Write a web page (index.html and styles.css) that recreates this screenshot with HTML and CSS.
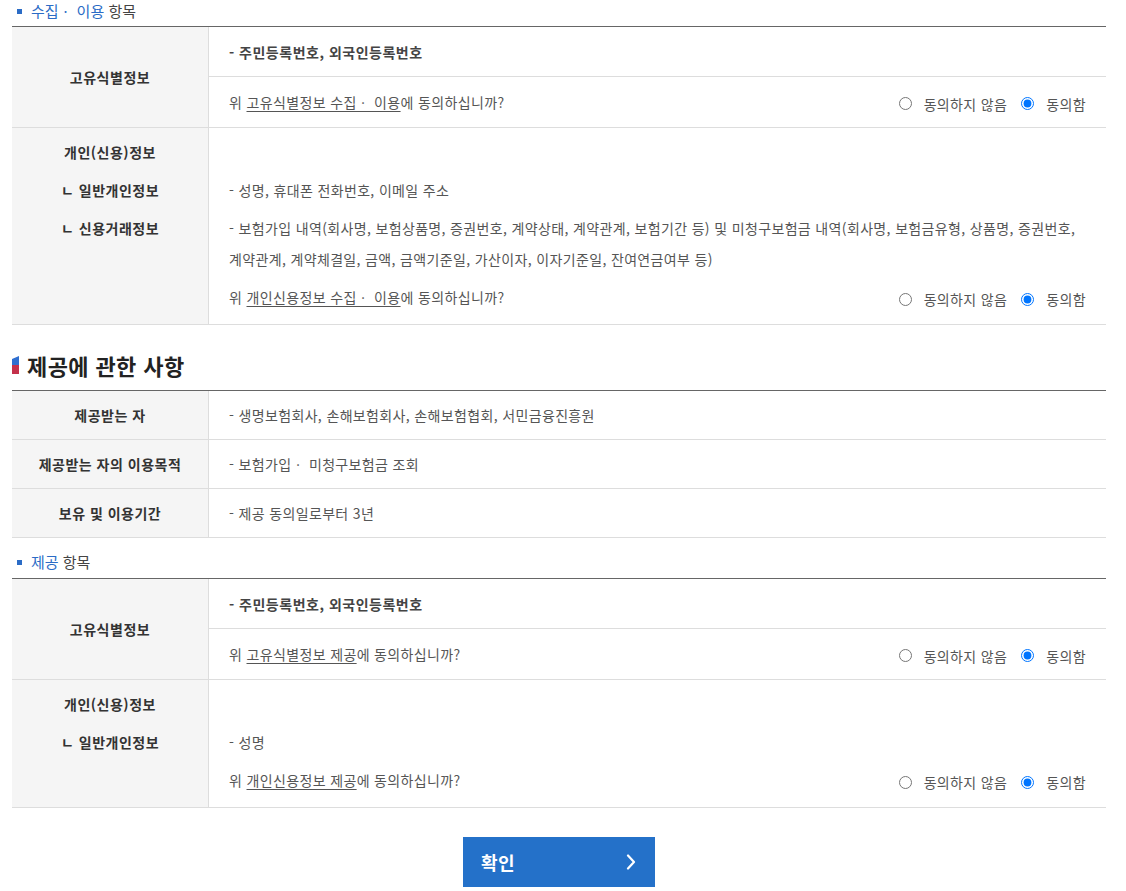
FILE: index.html
```html
<!DOCTYPE html>
<html lang="ko">
<head>
<meta charset="utf-8">
<title>개인(신용)정보 수집·이용·제공 동의</title>
<link rel="stylesheet" href="styles.css">
</head>
<body>
<div class="page">
  <h4 class="sub-title"><span class="hl">수집ㆍ 이용</span> 항목</h4>
  <div class="info-table">
    <div class="row">
      <div class="th">고유식별정보</div>
      <div class="td split">
        <div class="line strong">- 주민등록번호, 외국인등록번호</div>
        <div class="line question">
          <p>위 <u>고유식별정보 수집ㆍ 이용</u>에 동의하십니까?</p>
          <div class="agree">
            <label><input type="radio" name="q1"> 동의하지 않음</label>
            <label><input type="radio" name="q1" checked> 동의함</label>
          </div>
        </div>
      </div>
    </div>
    <div class="row">
      <div class="th multi">
        <p>개인(신용)정보</p>
        <p>ㄴ 일반개인정보</p>
        <p>ㄴ 신용거래정보</p>
      </div>
      <div class="td stack">
        <p>- 성명, 휴대폰 전화번호, 이메일 주소</p>
        <p>- 보험가입 내역(회사명, 보험상품명, 증권번호, 계약상태, 계약관계, 보험기간 등) 및 미청구보험금 내역(회사명, 보험금유형, 상품명, 증권번호, 계약관계, 계약체결일, 금액, 금액기준일, 가산이자, 이자기준일, 잔여연금여부 등)</p>
        <div class="question">
          <p>위 <u>개인신용정보 수집ㆍ 이용</u>에 동의하십니까?</p>
          <div class="agree">
            <label><input type="radio" name="q2"> 동의하지 않음</label>
            <label><input type="radio" name="q2" checked> 동의함</label>
          </div>
        </div>
      </div>
    </div>
  </div>

  <h3 class="section-title"><span class="mark"><svg width="7" height="18" viewBox="0 0 7 18"><polygon points="0,3 7,0 7,9 0,9" fill="#2f6fd0"/><polygon points="0,9 7,9 7,18 0,18" fill="#c4314b"/></svg></span>제공에 관한 사항</h3>
  <div class="info-table">
    <div class="row simple">
      <div class="th">제공받는 자</div>
      <div class="td">- 생명보험회사, 손해보험회사, 손해보험협회, 서민금융진흥원</div>
    </div>
    <div class="row simple">
      <div class="th">제공받는 자의 이용목적</div>
      <div class="td">- 보험가입ㆍ 미청구보험금 조회</div>
    </div>
    <div class="row simple">
      <div class="th">보유 및 이용기간</div>
      <div class="td">- 제공 동의일로부터 3년</div>
    </div>
  </div>

  <h4 class="sub-title second"><span class="hl">제공</span> 항목</h4>
  <div class="info-table">
    <div class="row">
      <div class="th">고유식별정보</div>
      <div class="td split">
        <div class="line strong">- 주민등록번호, 외국인등록번호</div>
        <div class="line question">
          <p>위 <u>고유식별정보 제공</u>에 동의하십니까?</p>
          <div class="agree">
            <label><input type="radio" name="q3"> 동의하지 않음</label>
            <label><input type="radio" name="q3" checked> 동의함</label>
          </div>
        </div>
      </div>
    </div>
    <div class="row">
      <div class="th multi">
        <p>개인(신용)정보</p>
        <p>ㄴ 일반개인정보</p>
      </div>
      <div class="td stack">
        <p>- 성명</p>
        <div class="question">
          <p>위 <u>개인신용정보 제공</u>에 동의하십니까?</p>
          <div class="agree">
            <label><input type="radio" name="q4"> 동의하지 않음</label>
            <label><input type="radio" name="q4" checked> 동의함</label>
          </div>
        </div>
      </div>
    </div>
  </div>

  <div class="btn-area">
    <button type="button" class="btn-confirm">
      <span>확인</span>
      <svg width="10" height="16" viewBox="0 0 10 16"><polyline points="2,1.5 8,8 2,14.5" fill="none" stroke="#fff" stroke-width="2.2" stroke-linecap="round" stroke-linejoin="round"/></svg>
    </button>
  </div>
</div>
</body>
</html>
```

FILE: styles.css
```css
* { box-sizing: border-box; }

body {
  margin: 0;
  font-family: "Noto Sans CJK KR", "Noto Sans", sans-serif;
  font-size: 14px;
  letter-spacing: 0.35px;
  word-break: keep-all;
  color: #555;
  background: #fff;
}

p { margin: 0; }

.page {
  width: 1094px;
  margin-left: 12px;
}

.sub-title {
  position: relative;
  margin: 0;
  height: 26px;
  padding: 0 0 4px 19px;
  font-size: 15px;
  font-weight: 400;
  line-height: 22px;
  letter-spacing: 0;
  color: #444;
}

.sub-title::before {
  content: "";
  position: absolute;
  left: 5px;
  top: 9px;
  width: 5px;
  height: 5px;
  background: #2b6cc6;
}

.sub-title .hl { color: #2b6cc6; }

.sub-title.second {
  margin-top: 13px;
  height: 27px;
  padding-bottom: 5px;
}

.section-title {
  display: flex;
  align-items: center;
  gap: 8px;
  margin: 25px 0 0;
  height: 40px;
  padding-bottom: 10px;
  font-size: 22px;
  font-weight: 700;
  line-height: 30px;
  letter-spacing: 0.4px;
  color: #222;
}

.section-title .mark {
  display: flex;
}

.info-table {
  border-top: 1px solid #666;
}

.row {
  display: grid;
  grid-template-columns: 197px 1fr;
  border-bottom: 1px solid #ddd;
}

.th {
  display: flex;
  align-items: center;
  justify-content: center;
  background: #f5f5f5;
  border-right: 1px solid #ddd;
  font-weight: 700;
  letter-spacing: 0.5px;
  color: #333;
  text-align: center;
}

.th.multi {
  display: block;
  padding: 9px 0 11px;
}

.th.multi p,
.td.stack > p,
.td.stack .question p {
  line-height: 31px;
}

.th.multi p + p,
.td.stack > * + * {
  margin-top: 7px;
}

.td.split .line {
  display: flex;
  align-items: center;
  height: 50px;
  padding: 0 20px;
}

.td.split .line:first-child {
  border-bottom: 1px solid #ddd;
}

.line.strong {
  font-weight: 700;
  letter-spacing: 0.5px;
  color: #444;
}

.td.stack {
  padding: 47px 20px 11px;
}

.question {
  display: flex;
  align-items: center;
  justify-content: space-between;
}

.question u {
  text-underline-offset: 3px;
}

.agree {
  display: flex;
  align-items: center;
  padding-top: 3px;
}

.agree label {
  display: flex;
  align-items: center;
}

.agree label + label {
  margin-left: 14px;
}

.agree input {
  width: 13px;
  height: 13px;
  margin: 0 12px 0 0;
}

.row.simple {
  min-height: 49px;
}

.row.simple .td {
  display: flex;
  align-items: center;
  padding: 0 20px;
}

.btn-area {
  display: flex;
  justify-content: center;
  margin-top: 29px;
}

.btn-confirm {
  display: flex;
  align-items: center;
  justify-content: space-between;
  width: 192px;
  height: 50px;
  padding: 0 19px 0 18px;
  border: 0;
  background: #2471c9;
  color: #fff;
  font-family: inherit;
  font-size: 18px;
  font-weight: 700;
  letter-spacing: 0.5px;
  cursor: pointer;
}
```
